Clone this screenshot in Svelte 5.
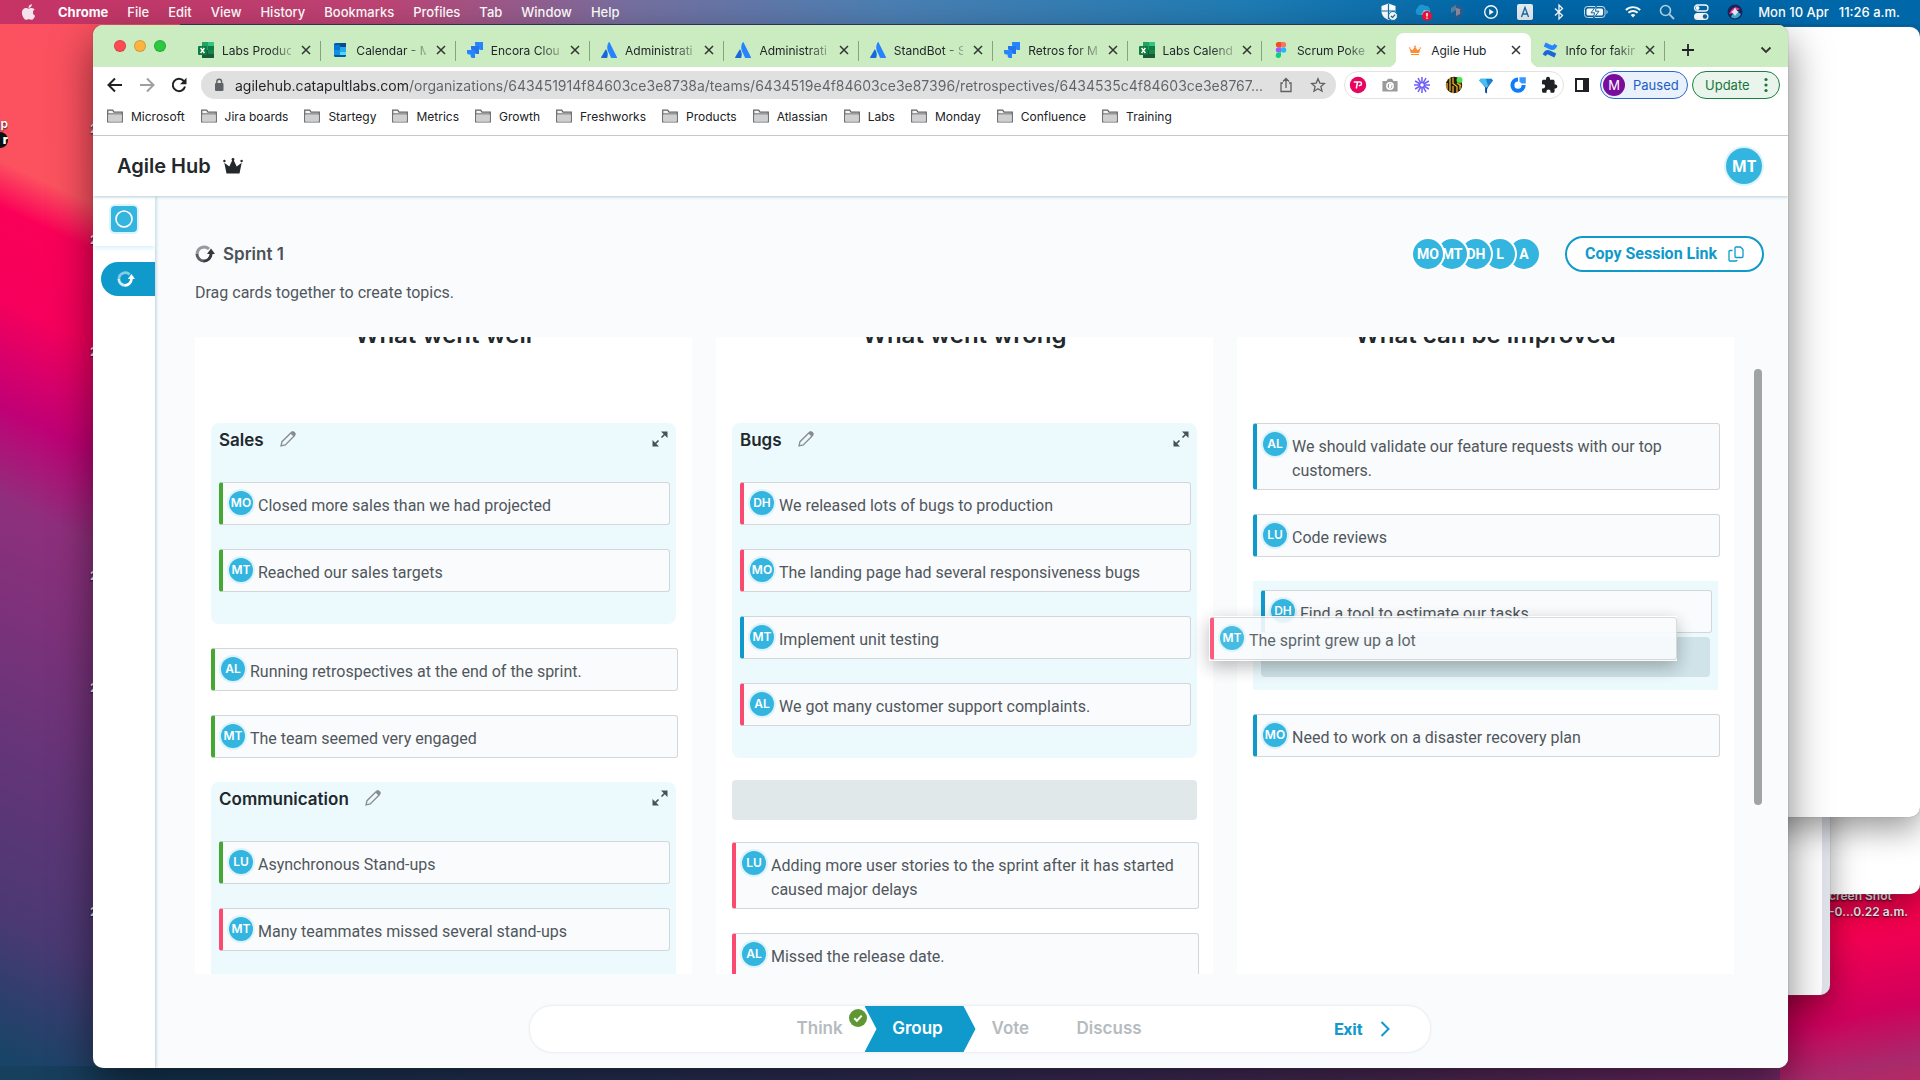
<script lang="ts">
	type Card = { who: string; text: string; tone: 'good' | 'bad' | 'idea' };
	type Item =
		| { kind: 'card'; card: Card }
		| { kind: 'group'; title?: string; cards: Card[]; dropping?: boolean }
		| { kind: 'slot' };

	const menus = ['File', 'Edit', 'View', 'History', 'Bookmarks', 'Profiles', 'Tab', 'Window', 'Help'];
	const statusIcons = ['shield', 'cloud', 'hex', 'play', 'input', 'bluetooth', 'battery', 'wifi', 'search', 'control', 'siri'];

	const tabs = [
		{ icon: 'excel', title: 'Labs Produc' },
		{ icon: 'calendar', title: 'Calendar - M' },
		{ icon: 'jira', title: 'Encora Clou' },
		{ icon: 'atlassian', title: 'Administrati' },
		{ icon: 'atlassian', title: 'Administrati' },
		{ icon: 'atlassian', title: 'StandBot - S' },
		{ icon: 'jira', title: 'Retros for M' },
		{ icon: 'excel', title: 'Labs Calend' },
		{ icon: 'figma', title: 'Scrum Poke' },
		{ icon: 'crown', title: 'Agile Hub', active: true },
		{ icon: 'confluence', title: 'Info for fakin' }
	];

	const bookmarks = [
		'Microsoft', 'Jira boards', 'Startegy', 'Metrics', 'Growth', 'Freshworks', 'Products',
		'Atlassian', 'Labs', 'Monday', 'Confluence', 'Training'
	];

	const extensions = ['pink', 'camera', 'burst', 'bee', 'gem', 'ring', 'puzzle'];

	let url = $state(
		'agilehub.catapultlabs.com/organizations/643451914f84603ce3e8738a/teams/6434519e4f84603ce3e87396/retrospectives/6434535c4f84603ce3e8767...'
	);

	const people = ['MO', 'MT', 'DH', 'L', 'A'];

	const columns: { title: string; items: Item[] }[] = [
		{
			title: 'What went well',
			items: [
				{
					kind: 'group',
					title: 'Sales',
					cards: [
						{ who: 'MO', text: 'Closed more sales than we had projected', tone: 'good' },
						{ who: 'MT', text: 'Reached our sales targets', tone: 'good' }
					]
				},
				{ kind: 'card', card: { who: 'AL', text: 'Running retrospectives at the end of the sprint.', tone: 'good' } },
				{ kind: 'card', card: { who: 'MT', text: 'The team seemed very engaged', tone: 'good' } },
				{
					kind: 'group',
					title: 'Communication',
					cards: [
						{ who: 'LU', text: 'Asynchronous Stand-ups', tone: 'good' },
						{ who: 'MT', text: 'Many teammates missed several stand-ups', tone: 'bad' }
					]
				}
			]
		},
		{
			title: 'What went wrong',
			items: [
				{
					kind: 'group',
					title: 'Bugs',
					cards: [
						{ who: 'DH', text: 'We released lots of bugs to production', tone: 'bad' },
						{ who: 'MO', text: 'The landing page had several responsiveness bugs', tone: 'bad' },
						{ who: 'MT', text: 'Implement unit testing', tone: 'idea' },
						{ who: 'AL', text: 'We got many customer support complaints.', tone: 'bad' }
					]
				},
				{ kind: 'slot' },
				{ kind: 'card', card: { who: 'LU', text: 'Adding more user stories to the sprint after it has started caused major delays', tone: 'bad' } },
				{ kind: 'card', card: { who: 'AL', text: 'Missed the release date.', tone: 'bad' } }
			]
		},
		{
			title: 'What can be improved',
			items: [
				{ kind: 'card', card: { who: 'AL', text: 'We should validate our feature requests with our top customers.', tone: 'idea' } },
				{ kind: 'card', card: { who: 'LU', text: 'Code reviews', tone: 'idea' } },
				{
					kind: 'group',
					dropping: true,
					cards: [{ who: 'DH', text: 'Find a tool to estimate our tasks', tone: 'idea' }]
				},
				{ kind: 'card', card: { who: 'MO', text: 'Need to work on a disaster recovery plan', tone: 'idea' } }
			]
		}
	];

	const dragged: Card = { who: 'MT', text: 'The sprint grew up a lot', tone: 'bad' };
</script>

{#snippet favicon(name: string)}
	<svg class="favicon" viewBox="0 0 16 16" aria-hidden="true">
		{#if name === 'excel'}
			<path d="M4 0h6v8H4z" fill="#21a366" /><path d="M10 0h6v4h-6z" fill="#33c481" />
			<path d="M10 4h6v4h-6z" fill="#107c41" /><path d="M4 8h12v8H4z" fill="#185c37" /><path d="M10 8h6v4h-6z" fill="#17864c" />
			<rect y="4" width="9" height="9" rx="1" fill="#107c41" />
			<path d="M2.6 6l3.8 5M6.4 6l-3.8 5" stroke="#fff" stroke-width="1.4" />
		{:else if name === 'calendar'}
			<rect x="2" y="1" width="12" height="14" rx="1.5" fill="#0358a7" />
			<path d="M2 3h6v5H2z" fill="#0078d4" /><path d="M8 1h6v4H8z" fill="#0a4a8f" /><path d="M8 5h6v5H8z" fill="#28a8ea" />
			<path d="M8 10h6v3H8z" fill="#50d9ff" /><path d="M2 8h6v5H2z" fill="#1490df" />
		{:else if name === 'jira'}
			<path d="M8 0h8v8h-2.400a2 2 0 01-2-2V4.400H10a2 2 0 01-2-2z" fill="#2684ff" />
			<path d="M4 4h8v8H9.600a2 2 0 01-2-2V8.400H6a2 2 0 01-2-2z" fill="#2373ea" />
			<path d="M0 8h8v8H5.600a2 2 0 01-2-2v-1.600H2a2 2 0 01-2-2z" fill="#2684ff" />
		{:else if name === 'atlassian'}
			<path d="M4.800 7.200c1.800 1.900 2.600 5 1.300 8.800H.6c-.5 0-.7-.4-.5-.8z" fill="#1868db" />
			<path d="M7.700.3c-2.100 3.300-2 7 .3 11l1.900 4.200c.1.300.4.500.7.5h4.900c.4 0 .7-.4.500-.8L8.500.3c-.200-.4-.6-.4-.8 0z" fill="#2684ff" />
		{:else if name === 'figma'}
			<path d="M5.500 0H8v5.300H5.500a2.650 2.650 0 010-5.300z" fill="#f24e1e" /><path d="M8 0h2.500a2.650 2.650 0 010 5.300H8z" fill="#ff7262" />
			<path d="M5.500 5.300H8v5.300H5.500a2.650 2.650 0 010-5.300z" fill="#a259ff" /><circle cx="10.600" cy="8" r="2.650" fill="#1abcfe" />
			<path d="M5.500 10.600H8v2.700a2.650 2.650 0 11-2.500-2.700z" fill="#0acf83" />
		{:else if name === 'crown'}
			<path d="M3.900 11.900h8.200v1.200H3.900zM3.700 11L2.800 6.300l2.700 1.900L8 4.600l2.500 3.600 2.700-1.900-.9 4.700z" fill="#ff8b34" />
			<circle cx="8" cy="4.300" r=".9" fill="#ff8b34" /><circle cx="2.600" cy="6" r=".8" fill="#ff8b34" /><circle cx="13.400" cy="6" r=".8" fill="#ff8b34" />
		{:else}
			<path d="M.6 12.300c2.200-4 4.300-5.300 8.400-3.400l5.300 2.500-1.900 4.200L7 13c-1.700-.8-2.500-.3-3.200 1.200z" fill="#1868db" />
			<path d="M15.400 3.700c-2.200 4-4.300 5.300-8.400 3.400L1.700 4.600 3.600.4 9 3c1.700.8 2.500.3 3.200-1.200z" fill="#2684ff" />
		{/if}
	</svg>
{/snippet}

{#snippet statusIcon(name: string)}
	<svg class="status-icon" class:wide={name === 'battery'} viewBox={name === 'battery' ? '0 0 24 18' : '0 0 18 18'} aria-hidden="true">
		{#if name === 'shield'}
			<path d="M8.500.5l7 2.500v5c0 4.500-3 7.500-7 9-4-1.500-7-4.500-7-9V3z" fill="#fff" />
			<path d="M8.500 1v15M1.500 8h14" stroke="#0a72ad" stroke-width="1.200" />
			<circle cx="13" cy="13" r="4.500" fill="#fff" stroke="#0a72ad" /><path d="M11 13l1.500 1.500 2.600-2.800" fill="none" stroke="#0a72ad" stroke-width="1.200" />
		{:else if name === 'cloud'}
			<path d="M4 12a4 4 0 01-.5-7A4.500 4.500 0 0111 3a4 4 0 015 4v5z" fill="#1c9ad6" /><path d="M7 12l3-5 6 1v4z" fill="#8fcdec" />
			<circle cx="13" cy="13" r="5" fill="#f3123a" /><path d="M13 10v3.500M13 14.600v1.200" stroke="#fff" stroke-width="1.600" />
		{:else if name === 'hex'}
			<path d="M9 1l6 3.500v8L9 17l-6-5 6-1-3-4z" fill="#2a5f94" /><path d="M8 5l4 1v5l-4 2z" fill="#8e8a9d" /><path d="M3 5l5-3v5l-5 3z" fill="#5d7f9d" />
		{:else if name === 'play'}
			<circle cx="9" cy="9" r="6.300" fill="none" stroke="#fff" stroke-width="1.400" /><path d="M7.200 6l4.600 3-4.600 3z" fill="#fff" />
		{:else if name === 'input'}
			<rect x="1" y="1" width="16" height="16" rx="2" fill="#e6eef5" /><path d="M5.500 14L9 4.500 12.500 14M6.700 11h4.600" fill="none" stroke="#1a6aa0" stroke-width="1.300" />
		{:else if name === 'bluetooth'}
			<path d="M5 5.500l7.500 7L9 16V2l3.500 3.500-7.500 7" fill="none" stroke="#fff" stroke-width="1.300" />
		{:else if name === 'battery'}
			<rect x=".5" y="3.500" width="20.500" height="11" rx="3" fill="none" stroke="#d3e4ef" /><rect x="2.500" y="5.500" width="16.500" height="7" rx="1.500" fill="#fff" />
			<path d="M22.500 7v4c1.500-.6 1.500-3.400 0-4z" fill="#d3e4ef" /><path d="M12.500 2.500L7 9.800h3.500L9.500 15.500 15 8.200h-3.500z" fill="#fff" stroke="#0a6fab" />
		{:else if name === 'wifi'}
			<path d="M1.800 7a10.500 10.500 0 0114.400 0M4.400 9.800a6.600 6.600 0 019.200 0" fill="none" stroke="#fff" stroke-width="1.900" /><path d="M6.600 12a3.600 3.600 0 014.800 0L9 14.600z" fill="#fff" />
		{:else if name === 'search'}
			<circle cx="7.500" cy="7.500" r="5" fill="none" stroke="#b6d3e6" stroke-width="1.600" /><path d="M11.200 11.200L16 16" stroke="#b6d3e6" stroke-width="1.900" />
		{:else if name === 'control'}
			<rect x="2.500" y="2" width="13.500" height="6" rx="3" fill="none" stroke="#fff" stroke-width="1.300" /><circle cx="5.500" cy="5" r="2" fill="#fff" />
			<rect x="2" y="10" width="14.500" height="7" rx="3.500" fill="#fff" /><circle cx="13" cy="13.500" r="2.200" fill="#0c69a4" />
		{:else}
			<circle cx="9" cy="9" r="7.500" fill="#20235c" /><path d="M3 11c3-7 7-8 11-5-2 1-4 1-5 4z" fill="#e4418f" /><path d="M5 14c1-4 5-6 10-3-2 4-6 6-10 3z" fill="#35b7d8" />
			<path d="M9 4c1 3 2 4 4 5-2 1-3 2-4 4-1-2-2-3-4-4 2-1 3-2 4-5z" fill="#f3e9fb" />
		{/if}
	</svg>
{/snippet}

{#snippet extensionIcon(name: string)}
	<svg class="extension-icon" viewBox="0 0 18 18" aria-hidden="true">
		{#if name === 'pink'}
			<circle cx="9" cy="9" r="8.200" fill="#e8045f" /><path d="M4.800 6h3.700L7.300 12.500M9 6h1.800a1.700 1.700 0 010 3.400H9.700" fill="none" stroke="#fff" stroke-width="1.500" />
		{:else if name === 'camera'}
			<path d="M2 5h3.500L7 2.800h4L12.500 5H16a.6.6 0 01.6.6V15a.6.6 0 01-.6.600H2a.6.6 0 01-.6-.6V5.600A.6.6 0 012 5z" fill="#9b9b9b" />
			<circle cx="9" cy="10" r="3.200" fill="#9b9b9b" stroke="#fff" stroke-width="1.500" /><path d="M8 8h3l-1 4H8z" fill="#fff" />
		{:else if name === 'burst'}
			<path d="M9 1v16M1 9h16M5 2.100l8 13.800M13 2.100L5 15.900M2.100 5l13.800 8M15.900 5L2.100 13" stroke="#6d5ef5" stroke-width="1.500" /><circle cx="9" cy="9" r="1.700" fill="#fff" />
		{:else if name === 'bee'}
			<circle cx="9" cy="9" r="8.200" fill="#1e1a12" /><path d="M5 2v13M8 1.500v6l4 3v6M8 10v7M12 7l4 3M2 7v6M15 7.500v6" fill="none" stroke="#f0b41e" stroke-width="1.300" />
			<circle cx="14.500" cy="4" r="3" fill="#4be34b" />
		{:else if name === 'gem'}
			<path d="M2 4l6 7v5.500l2 1V11l6-7z" fill="#0f5fb8" /><path d="M16 4l-5.500 8-1.500 5.500V9z" fill="#0c3f86" /><path d="M3.500 2.500h11L16 4.500 9.500 12 2 4.500z" fill="#49bdf2" /><path d="M9 3h5.500L16 4.500 11 10z" fill="#1e7fd0" />
		{:else if name === 'ring'}
			<path d="M9 1.600A7.600 7.600 0 1016.600 9h-4A3.600 3.600 0 119 5.500z" fill="#0d7dfa" /><path d="M10.500 1.200h6.300v6.200h-4.300l-2-2z" fill="#3a97ff" />
		{:else}
			<path d="M14.800 8.500h-1.200V5.300c0-.9-.7-1.500-1.500-1.500H9V2.700a2 2 0 00-4 0v1.100H2.500C1.700 3.800 1 4.500 1 5.300v2.900h1.100a2.100 2.100 0 010 4.200H1v2.900c0 .8.700 1.500 1.500 1.500h2.900v-1.100a2.100 2.100 0 014.200 0v1.100h2.500c.8 0 1.500-.7 1.500-1.500v-2.900h1.200a2 2 0 000-3.900z" fill="#202124" />
		{/if}
	</svg>
{/snippet}

{#snippet loopIcon()}
	<svg class="loop" viewBox="0 0 20 20" aria-hidden="true">
		<path d="M9 17a7 7 0 01-7-7" fill="none" stroke="currentColor" stroke-width="3" opacity=".8" />
		<path d="M2.200 10.200A7 7 0 0114 5" fill="none" stroke="currentColor" stroke-width="3" opacity=".5" />
		<path d="M8.800 17a7 7 0 007.200-7V8" fill="none" stroke="currentColor" stroke-width="3" />
		<path d="M12 10l4-5.500 4 5.500z" fill="currentColor" />
	</svg>
{/snippet}

{#snippet cardView(card: Card)}
	<article class="card {card.tone}">
		<span class="initials">{card.who}</span>
		<p>{card.text}</p>
	</article>
{/snippet}

<div class="desktop">
	<span class="file-label" style:left="1829px" style:top="888px">creen Shot<br />-0...0.22 a.m.</span>
	<div class="window-behind second"></div>
	<div class="window-behind third"></div>
	<div class="window-behind fourth"></div>
	<span class="disk-label">p<br /><b>r</b></span>
	{#each [121, 232, 344, 568, 680, 904] as top}
		<span class="file-label" style:left="90px" style:top="{top}px">2</span>
	{/each}

	<header class="menubar">
		<nav>
			<svg class="apple" viewBox="0 0 384 512" aria-hidden="true"><path fill="#f4e3ec" d="M318.700 268.700c-.2-36.700 16.400-64.400 50-84.800-18.800-26.900-47.200-41.700-84.700-44.600-35.500-2.800-74.300 20.700-88.500 20.700-15 0-49.400-19.700-76.400-19.700C63.300 141.200 4 184.800 4 273.500q0 39.300 14.400 81.200c12.800 36.700 59 126.700 107.200 125.200 25.200-.6 43-17.900 75.800-17.900 31.800 0 48.300 17.900 76.400 17.900 48.600-.7 90.400-82.500 102.600-119.300-65.200-30.700-61.700-90-61.700-91.900zm-56.600-164.200c27.300-32.400 24.800-61.900 24-72.500-24.100 1.400-52 16.400-67.900 34.900-17.500 19.800-27.800 44.300-25.600 71.900 26.100 2 49.900-11.400 69.500-34.300z" /></svg>
			<button class="app-name">Chrome</button>
			{#each menus as menu}
				<button>{menu}</button>
			{/each}
		</nav>
		<div class="status">
			{#each statusIcons as name}
				{@render statusIcon(name)}
			{/each}
			<time><span>Mon 10 Apr</span><span>11:26 a.m.</span></time>
		</div>
	</header>

	<div class="window">
		<div class="tabstrip">
			<div class="lights"><i class="red"></i><i class="amber"></i><i class="green"></i></div>
			<div class="tabs">
				{#each tabs as tab}
					<div class="tab" class:active={tab.active}>
						{@render favicon(tab.icon)}
						<span class="tab-title">{tab.title}</span>
						<button class="close" aria-label="Close tab">
							<svg viewBox="0 0 10 10"><path d="M1 1l8 8M9 1L1 9" stroke="#333" stroke-width="1.500" /></svg>
						</button>
					</div>
				{/each}
			</div>
			<button class="new-tab" aria-label="New tab"><svg viewBox="0 0 14 14"><path d="M7 1v12M1 7h12" stroke="#202124" stroke-width="1.800" /></svg></button>
			<button class="tab-search" aria-label="Search tabs"><svg viewBox="0 0 12 12"><path d="M1.500 3.500L6 8l4.500-4.500" fill="none" stroke="#333" stroke-width="1.800" /></svg></button>
		</div>

		<div class="toolbar">
			<div class="nav-buttons">
				<button aria-label="Back"><svg viewBox="0 0 16 16"><path d="M15 8H2M8 1.500L1.500 8 8 14.500" fill="none" stroke="#202124" stroke-width="2" /></svg></button>
				<button aria-label="Forward"><svg viewBox="0 0 16 16"><path d="M1 8h13M8 1.500L14.500 8 8 14.500" fill="none" stroke="#a0a0a0" stroke-width="2" /></svg></button>
				<button aria-label="Reload"><svg viewBox="0 0 16 16"><path d="M14 9.500A6.200 6.200 0 1112.800 4" fill="none" stroke="#202124" stroke-width="2" /><path d="M15.500.8v6.400H9z" fill="#202124" /></svg></button>
			</div>
			<div class="address">
				<svg class="lock" viewBox="0 0 10 14" aria-hidden="true"><rect x="1" y="5" width="8.500" height="8" rx="1" fill="#5f6368" /><path d="M2.800 5.500V3.700a2.400 2.400 0 014.800 0v1.800" fill="none" stroke="#5f6368" stroke-width="1.400" /></svg>
				<input aria-label="Address" bind:value={url} spellcheck="false" />
				<button aria-label="Share"><svg viewBox="0 0 16 16"><path d="M5 6H3v8.500h10V6h-2M8 11V2M5 4.500l3-3 3 3" fill="none" stroke="#606060" stroke-width="1.300" /></svg></button>
				<button aria-label="Bookmark"><svg viewBox="0 0 16 16"><path d="M8 1.800l1.800 4.300 4.700.4-3.600 3.100 1.100 4.600L8 11.700l-4 2.500 1.100-4.600L1.500 6.500l4.700-.4z" fill="none" stroke="#606060" stroke-width="1.300" /></svg></button>
			</div>
			<div class="extensions">
				{#each extensions as name}
					{@render extensionIcon(name)}
				{/each}
			</div>
			<svg class="side-panel" viewBox="0 0 16 16" aria-hidden="true"><path d="M1 1h14v14H1z" fill="#202124" /><path d="M3 3h6v10H3z" fill="#fff" /></svg>
			<button class="chip paused"><b>M</b>Paused</button>
			<button class="chip update">Update<svg viewBox="0 0 4 16"><circle cx="2" cy="2.500" r="1.600" fill="#19763a" /><circle cx="2" cy="8" r="1.600" fill="#19763a" /><circle cx="2" cy="13.500" r="1.600" fill="#19763a" /></svg></button>
		</div>

		<nav class="bookmarks">
			{#each bookmarks as name}
				<a href="#{name}">
					<svg viewBox="0 0 16 14" aria-hidden="true"><path d="M.7 13V1.200h5l1.300 2h8.300V13z" fill="#f3f3f3" stroke="#606367" stroke-width="1.200" /><path d="M1.500 5.500h13v7h-13z" fill="#cfcfcf" /><path d="M1 4.900h14" stroke="#606367" /></svg>
					{name}
				</a>
			{/each}
		</nav>

		<header class="app-header">
			<h1>Agile Hub</h1>
			<svg class="crown" viewBox="0 0 20 16" aria-hidden="true"><path d="M3.500 15.500L1.300 4.800l5 3.700L10 .8l3.700 7.700 5-3.700-2.200 10.700z" fill="#22282c" /><circle cx="10" cy="1.500" r="1.400" fill="#22282c" /><circle cx="1.400" cy="3" r="1.200" fill="#22282c" /><circle cx="18.600" cy="3" r="1.200" fill="#22282c" /></svg>
			<button class="me">MT</button>
		</header>

		<div class="app">
			<aside>
				<div class="team"><a href="#team" aria-label="Team"><svg viewBox="0 0 26 26"><circle cx="13" cy="13" r="8" fill="none" stroke="#fff" stroke-width="1.600" /></svg></a></div>
				<a class="current" href="#retro" aria-label="Retrospectives">{@render loopIcon()}</a>
			</aside>

			<main>
				<div class="page-head">
					{@render loopIcon()}
					<h2>Sprint 1</h2>
					<div class="people">
						{#each people as person}
							<span>{person}</span>
						{/each}
					</div>
					<button class="copy">
						Copy Session Link
						<svg viewBox="0 0 16 16" aria-hidden="true"><path d="M8 1h4.500L15 3.500v7a1 1 0 01-1 1H8a1 1 0 01-1-1V2a1 1 0 011-1zM4.500 4.500H2a1 1 0 00-1 1V14a1 1 0 001 1h6a1 1 0 001-1" fill="none" stroke="#0f9acb" stroke-width="1.300" /></svg>
					</button>
				</div>
				<p class="hint">Drag cards together to create topics.</p>

				<div class="board">
					{#each columns as column}
						<section class="column">
							<h3>{column.title}</h3>
							<div class="items">
								{#each column.items as item}
									{#if item.kind === 'card'}
										{@render cardView(item.card)}
									{:else if item.kind === 'slot'}
										<div class="slot"></div>
									{:else}
										<div class="group" class:dropping={item.dropping}>
											{#if item.title}
												<div class="group-head">
													<h4>{item.title}</h4>
													<button aria-label="Rename topic"><svg viewBox="0 0 16 16"><path d="M1 15l1-4.300L11 1.700a2 2 0 013.200 0 2 2 0 01.2 3L5.300 14z" fill="none" stroke="#878c90" stroke-width="1.300" /><path d="M10.500 2.500l1.200-1.300a2 2 0 013 3L13.500 5.500z" fill="#878c90" /></svg></button>
													<button class="expand" aria-label="Expand topic"><svg viewBox="0 0 16 16"><path d="M9 0.500h6.500V7zM.5 9v6.500H7z" fill="#4a5155" /><path d="M9.500 6.500l3.500-3.500M3 13l3.500-3.500" stroke="#4a5155" stroke-width="1.600" /></svg></button>
												</div>
											{/if}
											<div class="items">
												{#each item.cards as card}
													{@render cardView(card)}
												{/each}
												{#if item.dropping}
													<div class="slot"></div>
													<div class="dragged">{@render cardView(dragged)}</div>
												{/if}
											</div>
										</div>
									{/if}
								{/each}
							</div>
						</section>
					{/each}
					<div class="scrollbar"><i></i></div>
				</div>

				<nav class="steps">
					<a class="think" href="#think">Think
						<svg class="done" viewBox="0 0 18 18" aria-hidden="true"><circle cx="9" cy="9" r="9" fill="#5f9732" /><path d="M5.300 9.200l2.600 2.600 4.800-5.200" fill="none" stroke="#fff" stroke-width="2" /></svg>
					</a>
					<a class="now" href="#group">Group</a>
					<a class="vote" href="#vote">Vote</a>
					<a class="discuss" href="#discuss">Discuss</a>
					<a class="exit" href="#exit">Exit
						<svg viewBox="0 0 10 16" aria-hidden="true"><path d="M1.500 1L8.500 8l-7 7" fill="none" stroke="#0f9acb" stroke-width="2" /></svg>
					</a>
				</nav>
			</main>
		</div>
	</div>
</div>

<style>
	:global(body) {
		margin: 0;
		font-family: Inter, sans-serif;
		overflow: hidden;
	}

	.desktop {
		position: relative;
		height: 100vh;
		overflow: hidden;
		background:
			linear-gradient(#0068a6, #0068a6) right top / 140px 40px no-repeat,
			linear-gradient(170deg, #ff0050 80%, #f80050 85%, #d0005c 93%, #a82a6c 98%, #b52a62) right top / 140px 100% no-repeat,
			linear-gradient(90deg, #17405f, #173a58 8%, #33305c 45%, #4f2c5c 72%, #8a2a72) left bottom / 100% 14px no-repeat,
			linear-gradient(205deg, #fb5060 0%, #fc525f 21%, #fa0058 25%, #f5005c 33%, #c10075 42%, #8f2f7c 50%, #633578 72%, #4b3973 86%, #174467 98%) left top / 180px 100% no-repeat,
			#33305c;
	}

	button {
		padding: 0;
		border: 0;
		background: none;
		font: inherit;
		color: inherit;
		display: flex;
		align-items: center;
	}

	a {
		color: inherit;
		text-decoration: none;
	}

	h1, h2, h3, h4, p {
		margin: 0;
	}

	.window-behind {
		position: absolute;
		width: 300px;
		background: #fff;
		box-shadow: 0 0 1px #777, 0 12px 32px rgba(0, 0, 0, 0.4);
	}

	.second {
		top: 300px;
		right: 0;
		bottom: 186px;
		border-radius: 0 0 10px 0;
	}

	.third {
		top: 300px;
		right: 90px;
		bottom: 85px;
		box-sizing: border-box;
		border-right: 8px solid #e0e2e9;
		border-radius: 0 0 10px 0;
	}

	.fourth {
		top: 27px;
		right: 0;
		bottom: 263px;
		border-radius: 10px;
	}

	.file-label,
	.disk-label {
		position: absolute;
		font-size: 12px;
		line-height: 16px;
		font-weight: 600;
		color: #fff;
		text-shadow: 0 1px 2px rgba(0, 0, 0, 0.8);
		white-space: nowrap;
	}

	.disk-label {
		left: 0;
		top: 116px;
		width: 8px;
		overflow: hidden;
		direction: rtl;
	}

	.disk-label b {
		display: block;
		background: #111;
		border-radius: 0 8px 8px 0;
	}

	.menubar {
		position: relative;
		display: flex;
		justify-content: space-between;
		align-items: center;
		height: 24px;
		padding: 0 20px 0 21px;
		font-size: 13px;
		font-weight: 500;
		color: #fff;
		background: linear-gradient(90deg, #c63264 0%, #bd4475 20%, #7570a0 33%, #4c7fb3 46%, #1f7cb4 65%, #0067a8 78%, #0067a8);
	}

	.menubar nav,
	.status,
	.menubar time {
		display: flex;
		align-items: center;
	}

	.menubar nav {
		gap: 19px;
	}

	.apple {
		width: 15px;
		height: 18px;
		margin-right: 3px;
	}

	.app-name {
		font-weight: 700;
	}

	.status {
		gap: 16px;
	}

	.status-icon {
		width: 18px;
		height: 18px;
	}

	.status-icon.wide {
		width: 24px;
	}

	.menubar time {
		gap: 10px;
		margin-left: -2px;
	}

	.window {
		position: absolute;
		top: 25px;
		left: 93px;
		right: 132px;
		bottom: 12px;
		display: flex;
		flex-direction: column;
		overflow: hidden;
		border-radius: 10px;
		background: #fff;
		box-shadow: 0 0 1px #555, 0 16px 40px rgba(0, 0, 0, 0.5);
	}

	.tabstrip {
		display: flex;
		align-items: center;
		height: 42px;
		padding-right: 16px;
		background: #cbebc0;
		font-size: 12px;
		color: #22262a;
	}

	.lights {
		display: flex;
		flex: none;
		gap: 8px;
		width: 73px;
		padding-left: 21px;
	}

	.lights i {
		box-sizing: border-box;
		width: 12px;
		height: 12px;
		border-radius: 50%;
		border: 1px solid rgba(0, 0, 0, 0.15);
	}

	.red { background: #fe4b54; }
	.amber { background: #fdb43f; }
	.green { background: #2bc840; }

	.tabs {
		display: flex;
		flex: 0 1 1478px;
		align-self: stretch;
		min-width: 0;
		padding-top: 8px;
	}

	.tab {
		position: relative;
		display: flex;
		flex: 1;
		align-items: center;
		gap: 8px;
		min-width: 0;
		padding: 0 8px 0 11px;
	}

	.tab::after {
		content: '';
		position: absolute;
		right: 0;
		top: 8px;
		width: 1px;
		height: 20px;
		background: #85a37c;
	}

	.tab.active {
		background: #fff;
		border-radius: 8px 8px 0 0;
	}

	.tab:nth-child(9)::after {
		content: none;
	}

	/* flared feet of the selected tab */
	.tab.active::before,
	.tab.active::after {
		content: '';
		position: absolute;
		top: auto;
		bottom: 0;
		width: 8px;
		height: 8px;
		background: none;
	}

	.tab.active::before {
		left: -8px;
		border-radius: 0 0 8px 0;
		box-shadow: 3px 3px 0 #fff;
	}

	.tab.active::after {
		right: -8px;
		border-radius: 0 0 0 8px;
		box-shadow: -3px 3px 0 #fff;
	}

	.favicon {
		flex: none;
		width: 16px;
		height: 16px;
	}

	.tab-title {
		flex: 1;
		min-width: 0;
		white-space: nowrap;
		mask-image: linear-gradient(90deg, #000 48px, rgba(0, 0, 0, 0.2) 72px);
	}

	.active .tab-title {
		mask-image: none;
	}

	.close svg {
		width: 10px;
		height: 10px;
		padding: 2px;
	}

	.new-tab {
		margin-left: 16px;
		padding-top: 8px;
	}

	.new-tab svg {
		width: 14px;
		height: 14px;
	}

	.tab-search {
		margin-left: auto;
		padding-top: 8px;
	}

	.tab-search svg {
		width: 12px;
		height: 12px;
	}

	.toolbar {
		display: flex;
		align-items: center;
		height: 36px;
		padding: 0 8px 0 14px;
	}

	.nav-buttons {
		display: flex;
		gap: 16px;
		width: 94px;
	}

	.nav-buttons svg,
	.address button svg {
		width: 16px;
		height: 16px;
	}

	.address {
		display: flex;
		flex: 1;
		align-items: center;
		gap: 16px;
		height: 28px;
		min-width: 0;
		padding: 0 10px 0 13px;
		border-radius: 14px;
		background: #e0e0e0;
	}

	.lock {
		width: 10px;
		height: 14px;
	}

	.address input {
		flex: 1;
		min-width: 0;
		margin: 0 -12px 0 -5px;
		padding: 0;
		border: 0;
		outline: 0;
		font: 14px Inter, sans-serif;
		color: transparent;
		background: linear-gradient(90deg, #202124 174px, #5f6368 174px);
		background-clip: text;
	}

	.extensions {
		display: flex;
		align-items: center;
		gap: 14px;
		height: 26px;
		margin: 0 10px 0 8px;
		padding: 0 4px;
		border: 1px solid #e2e2e2;
		border-radius: 14px;
	}

	.extension-icon {
		width: 18px;
		height: 18px;
	}

	.side-panel {
		width: 16px;
		height: 16px;
		margin-right: 10px;
	}

	.chip {
		box-sizing: border-box;
		gap: 8px;
		width: 88px;
		height: 28px;
		border: 1px solid #2a66cd;
		border-radius: 14px;
		font-size: 13px;
	}

	.paused {
		padding-left: 2px;
		margin-right: 4px;
		background: #e9f1fc;
		color: #1c5cc8;
	}

	.paused b {
		width: 22px;
		height: 22px;
		border-radius: 50%;
		background: #7a0c9c;
		color: #fff;
		font-weight: 400;
		line-height: 22px;
		text-align: center;
	}

	.update {
		justify-content: space-between;
		padding: 0 11px 0 12px;
		border-color: #19803f;
		background: #e9f4ec;
		color: #19763a;
	}

	.update svg {
		width: 4px;
		height: 16px;
	}

	.bookmarks {
		display: flex;
		align-items: center;
		gap: 16px;
		height: 26px;
		padding: 0 14px 6px;
		border-bottom: 1px solid #c8c8c8;
		font-size: 12px;
		color: #202124;
	}

	.bookmarks a {
		display: flex;
		align-items: center;
		gap: 8px;
	}

	.bookmarks svg {
		width: 16px;
		height: 14px;
	}

	.app-header {
		position: relative;
		z-index: 1;
		display: flex;
		align-items: center;
		gap: 12px;
		height: 60px;
		padding: 0 26px 0 24px;
		background: #fff;
		box-shadow: 0 1px 3px #b4ced8;
	}

	h1 {
		font-size: 20px;
		font-weight: 600;
		color: #22282c;
	}

	.crown {
		width: 20px;
		height: 16px;
	}

	.me {
		justify-content: center;
		width: 36px;
		height: 36px;
		margin-left: auto;
		border-radius: 50%;
		background: #33b5e0;
		box-shadow: 0 0 0 2px #dcf3fb;
		font: 700 16px 'Open Sans', sans-serif;
		color: #fff;
	}

	.app {
		display: flex;
		flex: 1;
		min-height: 0;
	}

	aside {
		position: relative;
		width: 62px;
		box-shadow: 1px 0 3px #b4ced8;
	}

	.team {
		display: flex;
		justify-content: center;
		height: 40px;
		padding-top: 10px;
		box-shadow: 0 2px 5px #d5f0fa;
	}

	.team a {
		width: 26px;
		height: 26px;
		border-radius: 4px;
		background: #33b5e0;
		box-shadow: 0 0 0 2px #dcf3fb;
	}

	.current {
		display: flex;
		align-items: center;
		justify-content: center;
		height: 34px;
		margin: 16px 0 0 8px;
		padding-right: 4px;
		border-radius: 17px 0 0 17px;
		background: #0f9acb;
		color: #fff;
	}

	.loop {
		width: 20px;
		height: 20px;
	}

	.current .loop {
		width: 18px;
		height: 18px;
	}

	main {
		display: flex;
		flex: 1;
		flex-direction: column;
		min-width: 0;
		padding: 40px 24px 16px 40px;
		background: #fafbfd;
		font-family: Roboto, sans-serif;
		font-size: 16px;
		line-height: 24px;
		color: #50575c;
	}

	.page-head {
		display: flex;
		align-items: center;
		height: 36px;
		color: #33383b;
	}

	h2 {
		margin-left: 8px;
		font: 600 17px/18px Inter, sans-serif;
		color: #4b5257;
	}

	.people {
		display: flex;
		margin-left: auto;
	}

	.people span {
		position: relative;
		width: 30px;
		height: 30px;
		margin-right: -6px;
		border-radius: 50%;
		background: #33b5e0;
		box-shadow: 0 0 0 2px #fff;
		font-size: 14px;
		font-weight: 700;
		line-height: 30px;
		text-align: center;
		color: #fff;
	}

	.people span:nth-child(1) { z-index: 5; }
	.people span:nth-child(2) { z-index: 4; }
	.people span:nth-child(3) { z-index: 3; }
	.people span:nth-child(4) { z-index: 2; }

	.copy {
		gap: 11px;
		height: 36px;
		margin-left: 32px;
		padding: 0 18px;
		border: 2px solid #0f9acb;
		border-radius: 18px;
		background: #fff;
		font-weight: 700;
		color: #0f9acb;
	}

	.copy svg {
		width: 16px;
		height: 16px;
	}

	.hint {
		margin: 9px 0 32px;
	}

	.board {
		display: flex;
		flex: 1;
		gap: 24px;
		min-height: 0;
		overflow: hidden;
	}

	.column {
		flex: 1;
		min-width: 0;
		padding: 0 16px;
		background: #fff;
	}

	h3 {
		margin: -16px 0 74px;
		font: 600 24px/28px Inter, sans-serif;
		text-align: center;
		color: #22282c;
	}

	.items {
		display: flex;
		flex-direction: column;
		gap: 24px;
	}

	.card {
		display: flex;
		gap: 5px;
		box-sizing: border-box;
		min-height: 43px;
		margin-right: -2px;
		padding: 8px 12px 9px 6px;
		border: 1px solid #d3d7da;
		border-left: 4px solid;
		border-radius: 3px;
		background: #fafbfd;
	}

	.card p {
		padding: 3px 0 0;
		margin-bottom: -3px;
	}

	.good { border-left-color: #46a832; }
	.bad { border-left-color: #fb4a70; }
	.idea { border-left-color: #0f9acb; }

	.initials {
		flex: none;
		width: 24px;
		height: 24px;
		border-radius: 50%;
		background: #33b5e0;
		box-shadow: 0 0 0 2px #dcf3fb;
		font: 600 12px/24px Inter, sans-serif;
		text-align: center;
		color: #fff;
	}

	.group {
		padding: 0 8px 32px;
		border-radius: 8px;
		background: #ecfafe;
	}

	.group-head {
		display: flex;
		align-items: flex-start;
		height: 51px;
		padding-top: 8px;
	}

	.group-head svg {
		width: 16px;
		height: 16px;
	}

	.group-head button {
		margin-left: 16px;
	}

	.group-head .expand {
		margin-left: auto;
	}

	h4 {
		font: 600 17px/18px Inter, sans-serif;
		color: #22282c;
	}

	.slot {
		height: 40px;
		margin: -2px 0;
		border-radius: 4px;
		background: #e0e8ea;
	}

	.dropping {
		position: relative;
		padding: 9px 8px 13px;
		border-radius: 0;
	}

	.dropping .items {
		gap: 4px;
	}

	.dropping .slot {
		margin: 0;
		background: #cfe3e8;
	}

	.dragged {
		position: fixed;
		z-index: 10;
		top: 616px;
		left: 1209px;
		width: 467px;
		padding: 1px 0 1px 1px;
		background: #fff;
		box-shadow: 0 6px 18px rgba(0, 0, 0, 0.3);
		opacity: 0.9;
	}

	.dragged .card {
		margin-right: 0;
	}

	.scrollbar {
		width: 8px;
		margin: 0 2px 0 -4px;
		padding-top: 32px;
	}

	.scrollbar i {
		display: block;
		height: 436px;
		border-radius: 4px;
		background: #a0a4a5;
	}

	.steps {
		display: flex;
		align-items: stretch;
		align-self: center;
		box-sizing: border-box;
		width: 900px;
		max-width: 100%;
		height: 46px;
		margin-top: 32px;
		padding: 0 40px 0 267px;
		border-radius: 22px;
		background: #fff;
		box-shadow: 0 0 3px #d9dcdf;
		font: 600 17px/44px Inter, sans-serif;
		color: #b6bbbf;
	}

	.think {
		display: flex;
		width: 68px;
	}

	.done {
		flex: none;
		width: 18px;
		height: 18px;
		margin: 3px 0 0 6px;
	}

	.now {
		width: 111px;
		clip-path: polygon(0 0, 99px 0, 100% 50%, 99px 100%, 0 100%, 12px 50%);
		background: #0f9acb;
		text-align: center;
		text-indent: -5px;
		color: #fff;
	}

	.vote {
		width: 85px;
		margin-left: 16px;
	}

	.exit {
		display: flex;
		align-items: center;
		gap: 17px;
		margin-left: auto;
		font-family: Roboto, sans-serif;
		font-weight: 700;
		color: #0f9acb;
	}

	.exit svg {
		width: 10px;
		height: 16px;
	}
</style>
